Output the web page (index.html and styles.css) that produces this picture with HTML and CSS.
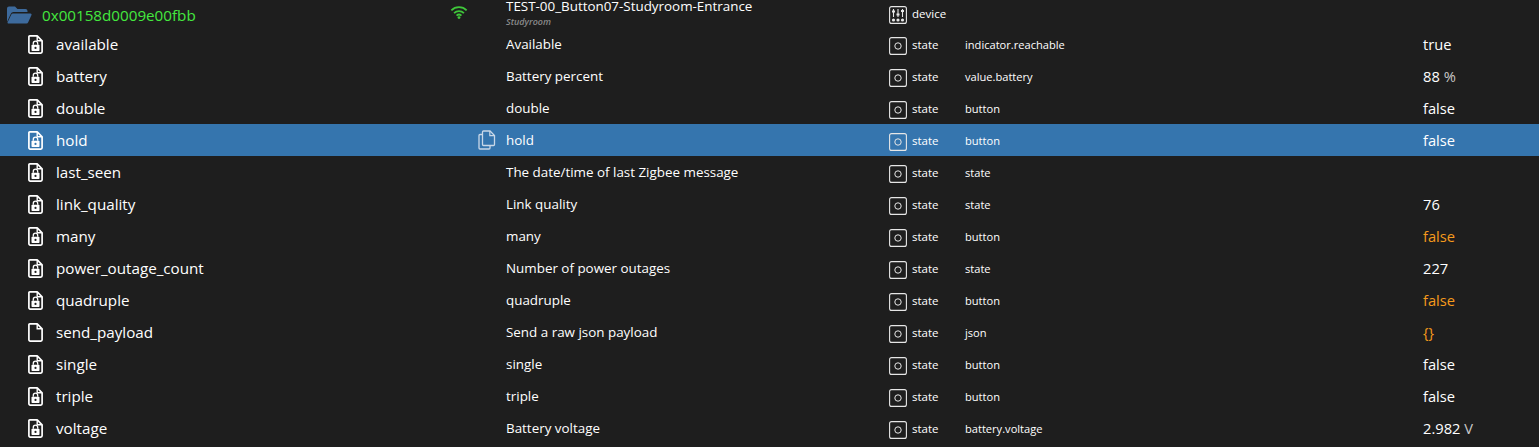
FILE: index.html
```html
<!DOCTYPE html>
<html lang="en">
<head>
<meta charset="utf-8">
<title>Objects</title>
<link rel="stylesheet" href="styles.css">
</head>
<body>
<svg class="defs" width="0" height="0" aria-hidden="true">
  <symbol id="file" viewBox="0 0 15 19">
    <path d="M1.800 .9h7.400l4.900 4.900V16.800a1.300 1.300 0 0 1-1.300 1.300H2.200A1.300 1.300 0 0 1 .9 16.800V1.800a.9.9 0 0 1 .9-.9z" fill="none" stroke="currentColor" stroke-width="1.700" stroke-linejoin="round"/>
    <path d="M9.200 1v4.800h4.800" fill="none" stroke="currentColor" stroke-width="1.400"/>
  </symbol>
  <symbol id="lockfile" viewBox="0 0 15 19">
    <path d="M1.800 .9h7.400l4.900 4.900V16.800a1.300 1.300 0 0 1-1.300 1.300H2.200A1.300 1.300 0 0 1 .9 16.800V1.800a.9.9 0 0 1 .9-.9z" fill="none" stroke="currentColor" stroke-width="1.700" stroke-linejoin="round"/>
    <path d="M9.200 1v4.800h4.800" fill="none" stroke="currentColor" stroke-width="1.400"/>
    <rect x="3.500" y="9.800" width="8" height="6.200" rx=".7" fill="currentColor"/>
    <path d="M5.300 9.800V8.300a2.200 2.200 0 0 1 4.400 0v1.500" fill="none" stroke="currentColor" stroke-width="1.300"/>
    <circle class="keyhole" cx="7.500" cy="12.900" r="1.100"/>
  </symbol>
  <symbol id="state" viewBox="0 0 18 18">
    <rect x=".6" y=".6" width="16.800" height="16.800" rx="2" fill="none" stroke="currentColor" stroke-width="1.100"/>
    <circle cx="9" cy="9" r="3.200" fill="none" stroke="currentColor" stroke-width="1"/>
  </symbol>
  <symbol id="device" viewBox="0 0 18 18">
    <rect x=".6" y=".6" width="16.800" height="16.800" rx="2" fill="none" stroke="currentColor" stroke-width="1.100"/>
    <path d="M4.500 3v8M9 3v8M13.500 3v8" stroke="currentColor" stroke-width="1.100"/>
    <path d="M3 5.500h3M7.500 8.500h3M12 5h3" stroke="currentColor" stroke-width="1.900"/>
    <circle cx="4.500" cy="14" r="1.600" fill="currentColor"/>
    <circle cx="9" cy="14" r="1.600" fill="currentColor"/>
    <circle cx="13.500" cy="14" r="1.600" fill="currentColor"/>
  </symbol>
</svg>
<main class="table">
  <div class="row head">
    <div class="name">
      <svg class="folder" viewBox="0 0 26 20" aria-hidden="true"><path d="M1 3.500A2 2 0 0 1 3 1.500h6l2.500 2.500h8a2 2 0 0 1 2 2v1H7.500a3 3 0 0 0-2.800 1.900L1 17z" fill="#3d6a9c"/><path d="M7 8.500h17.500c.9 0 1.300.8 1 1.500l-3.300 7.200a2 2 0 0 1-1.800 1.300H2.500c-.8 0-1.200-.7-.9-1.300l3.600-7.500A2 2 0 0 1 7 8.500z" fill="#3d6a9c"/></svg>
      <span class="device-id">0x00158d0009e00fbb</span>
    </div>
    <div class="tool"><svg class="wifi" viewBox="0 0 20 16" aria-hidden="true"><path d="M1.500 6a12 12 0 0 1 17 0M4.500 9a8 8 0 0 1 11 0M7.300 11.800a4 4 0 0 1 5.400 0" fill="none" stroke="#3fc63a" stroke-width="2"/><circle cx="10" cy="14" r="1.600" fill="#3fc63a"/></svg></div>
    <div class="desc stacked"><span>TEST-00_Button07-Studyroom-Entrance</span><em>Studyroom</em></div>
    <div class="kind"><svg class="ico"><use href="#device"/></svg><span>device</span></div>
    <div class="role"></div>
    <div class="value"></div>
  </div>
  <div class="row"><div class="name"><svg class="obj"><use href="#lockfile"/></svg><span>available</span></div><div class="tool"></div><div class="desc">Available</div><div class="kind"><svg class="ico"><use href="#state"/></svg><span>state</span></div><div class="role">indicator.reachable</div><div class="value">true</div></div>
  <div class="row"><div class="name"><svg class="obj"><use href="#lockfile"/></svg><span>battery</span></div><div class="tool"></div><div class="desc">Battery percent</div><div class="kind"><svg class="ico"><use href="#state"/></svg><span>state</span></div><div class="role">value.battery</div><div class="value">88 <span class="unit">%</span></div></div>
  <div class="row"><div class="name"><svg class="obj"><use href="#lockfile"/></svg><span>double</span></div><div class="tool"></div><div class="desc">double</div><div class="kind"><svg class="ico"><use href="#state"/></svg><span>state</span></div><div class="role">button</div><div class="value">false</div></div>
  <div class="row selected"><div class="name"><svg class="obj"><use href="#lockfile"/></svg><span>hold</span></div><div class="tool"><svg class="copy" viewBox="0 0 18 20" aria-hidden="true"><path d="M5.500 1h6.500l4.500 4.500V14.500a1 1 0 0 1-1 1h-10a1 1 0 0 1-1-1V2a1 1 0 0 1 1-1z" fill="none" stroke="currentColor" stroke-width="1.300"/><path d="M11.800 1v4.700h4.700" fill="none" stroke="currentColor" stroke-width="1.200"/><path d="M4.500 4.500H2a1 1 0 0 0-1 1V18a1 1 0 0 0 1 1h9a1 1 0 0 0 1-1v-2.500" fill="none" stroke="currentColor" stroke-width="1.300"/></svg></div><div class="desc">hold</div><div class="kind"><svg class="ico"><use href="#state"/></svg><span>state</span></div><div class="role">button</div><div class="value">false</div></div>
  <div class="row"><div class="name"><svg class="obj"><use href="#lockfile"/></svg><span>last_seen</span></div><div class="tool"></div><div class="desc">The date/time of last Zigbee message</div><div class="kind"><svg class="ico"><use href="#state"/></svg><span>state</span></div><div class="role">state</div><div class="value"></div></div>
  <div class="row"><div class="name"><svg class="obj"><use href="#lockfile"/></svg><span>link_quality</span></div><div class="tool"></div><div class="desc">Link quality</div><div class="kind"><svg class="ico"><use href="#state"/></svg><span>state</span></div><div class="role">state</div><div class="value">76</div></div>
  <div class="row"><div class="name"><svg class="obj"><use href="#lockfile"/></svg><span>many</span></div><div class="tool"></div><div class="desc">many</div><div class="kind"><svg class="ico"><use href="#state"/></svg><span>state</span></div><div class="role">button</div><div class="value warn">false</div></div>
  <div class="row"><div class="name"><svg class="obj"><use href="#lockfile"/></svg><span>power_outage_count</span></div><div class="tool"></div><div class="desc">Number of power outages</div><div class="kind"><svg class="ico"><use href="#state"/></svg><span>state</span></div><div class="role">state</div><div class="value">227</div></div>
  <div class="row"><div class="name"><svg class="obj"><use href="#lockfile"/></svg><span>quadruple</span></div><div class="tool"></div><div class="desc">quadruple</div><div class="kind"><svg class="ico"><use href="#state"/></svg><span>state</span></div><div class="role">button</div><div class="value warn">false</div></div>
  <div class="row"><div class="name"><svg class="obj"><use href="#file"/></svg><span>send_payload</span></div><div class="tool"></div><div class="desc">Send a raw json payload</div><div class="kind"><svg class="ico"><use href="#state"/></svg><span>state</span></div><div class="role">json</div><div class="value warn">{}</div></div>
  <div class="row"><div class="name"><svg class="obj"><use href="#lockfile"/></svg><span>single</span></div><div class="tool"></div><div class="desc">single</div><div class="kind"><svg class="ico"><use href="#state"/></svg><span>state</span></div><div class="role">button</div><div class="value">false</div></div>
  <div class="row"><div class="name"><svg class="obj"><use href="#lockfile"/></svg><span>triple</span></div><div class="tool"></div><div class="desc">triple</div><div class="kind"><svg class="ico"><use href="#state"/></svg><span>state</span></div><div class="role">button</div><div class="value">false</div></div>
  <div class="row"><div class="name"><svg class="obj"><use href="#lockfile"/></svg><span>voltage</span></div><div class="tool"></div><div class="desc">Battery voltage</div><div class="kind"><svg class="ico"><use href="#state"/></svg><span>state</span></div><div class="role">battery.voltage</div><div class="value">2.982 <span class="unit">V</span></div></div>
</main>
</body>
</html>
```
FILE: styles.css
```css
html, body {
  margin: 0;
  height: 100%;
  background: #1e1e1e;
  overflow: hidden;
}
body {
  font-family: "Open Sans", "Noto Sans", sans-serif;
  color: #fff;
}
.defs { display: block; height: 0; }
.row {
  --row-bg: #1e1e1e;
  display: grid;
  grid-template-columns: 478px 28px 383px 76px 458px 1fr;
  height: 32px;
  align-items: center;
}
.row.head { height: 28px; }
.row.selected { --row-bg: #3575ae; background: var(--row-bg); }
.keyhole { fill: var(--row-bg); }
.name {
  display: flex;
  align-items: center;
  padding-left: 28px;
  font-size: 15.200px;
}
.obj { width: 15px; height: 19px; margin-right: 13px; color: #fff; }
.head .name { padding-left: 6px; }
.folder { width: 26px; height: 20px; margin-right: 10px; }
.device-id { color: #44e83e; }
.tool { display: flex; align-items: center; }
.wifi { width: 18px; height: 14.400px; margin: 0 0 4px -28px; }
.copy { width: 18px; height: 20px; color: #c9d8e8; }
.desc { font-size: 13.400px; white-space: nowrap; }
.stacked { display: flex; flex-direction: column; align-self: start; line-height: 14px; margin-top: -1px; }
.stacked em { font-size: 9px; color: #8a8a8a; line-height: 14px; padding-top: 2px; font-weight: 600; }
.kind { display: flex; align-items: center; font-size: 11.500px; }
.ico { width: 18px; height: 18px; margin: 2px 5px -2px 0; color: #e6e6e6; }
.head .ico { margin: 0 5px 0 0; }
.head .kind span { margin-bottom: 3px; }
.role { font-size: 11.100px; }
.value { font-size: 14.700px; }
.unit { color: #c8c8c8; }
.warn { color: #f59a1c; }
```
